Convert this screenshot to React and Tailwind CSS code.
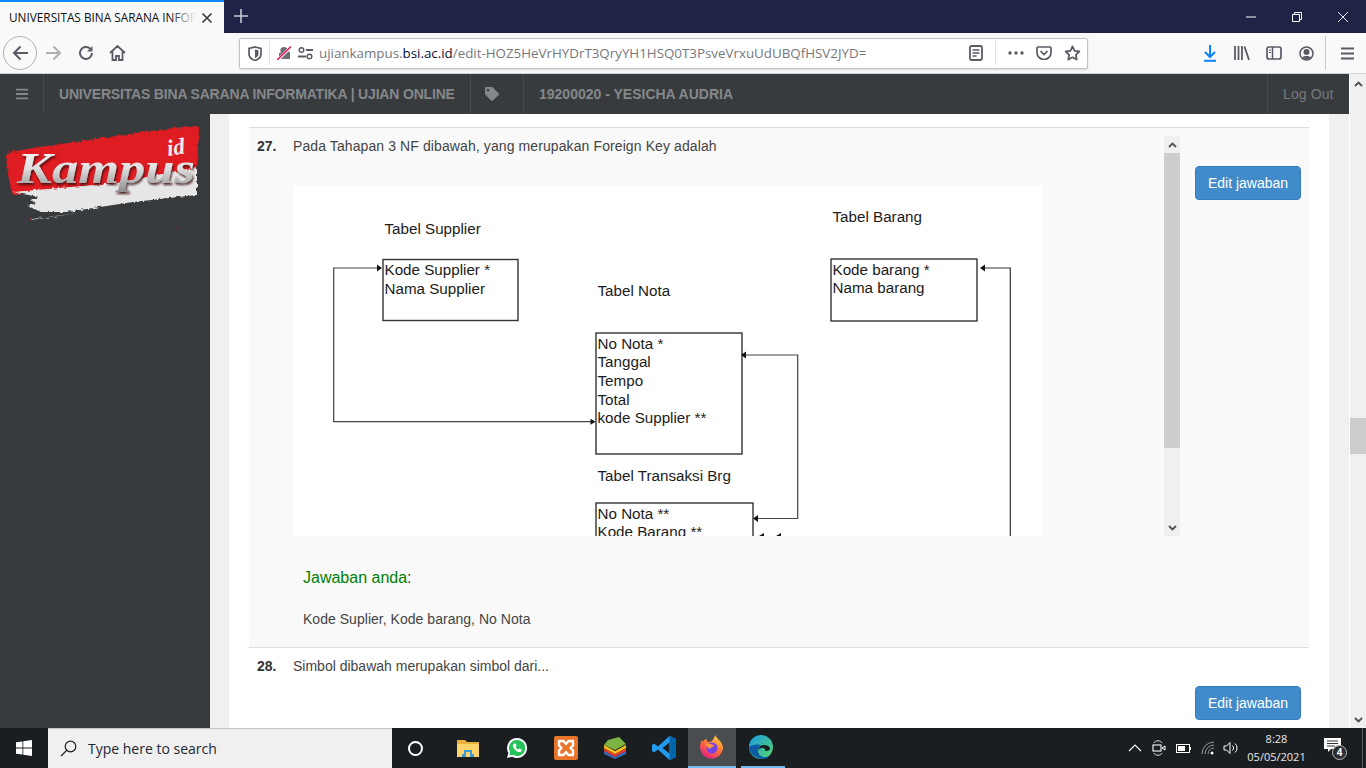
import { FaBars, FaTag } from 'react-icons/fa';

const DIAGRAM_BOXES = [
  { x: 383, y: 259.5, w: 135, h: 61 },
  { x: 596, y: 333, w: 146, h: 121 },
  { x: 596, y: 503, w: 157, h: 60 },
  { x: 831, y: 259, w: 146, h: 62 },
];

const DIAGRAM_LABELS = [
  ['Tabel Supplier', 384.5, 234],
  ['Kode Supplier *', 384.5, 274.5],
  ['Nama Supplier', 384.5, 294],
  ['Tabel Nota', 597.5, 296],
  ['No Nota *', 597.5, 349],
  ['Tanggal', 597.5, 367],
  ['Tempo', 597.5, 385.5],
  ['Total', 597.5, 404.5],
  ['kode Supplier **', 597.5, 423],
  ['Tabel Transaksi Brg', 597.5, 481],
  ['No Nota **', 597.5, 519],
  ['Kode Barang **', 597.5, 537],
  ['Tabel Barang', 832.5, 222],
  ['Kode barang *', 832.5, 275],
  ['Nama barang', 832.5, 293],
];

function Diagram() {
  return (
    <svg width="749" height="350" viewBox="293 186 749 350" className="block bg-white shrink-0">
      {DIAGRAM_BOXES.map(b => (
        <rect key={b.x + '-' + b.y} x={b.x} y={b.y} width={b.w} height={b.h} fill="none" stroke="#333" strokeWidth="1.4" />
      ))}
      <path d="M378 268H333.7V421.7H591" fill="none" stroke="#444" strokeWidth="1.2" />
      <path d="M746 355H797.7V518.5H757" fill="none" stroke="#444" strokeWidth="1.2" />
      <path d="M984 268H1010.3V540" fill="none" stroke="#333" strokeWidth="1.2" />
      <path d="M382 268l-5-3.5v7zM595.5 421.7l-5-3v6zM741 355l5-3.5v7zM753 518.5l5-3.5v7zM980 268l5-3.5v7zM759 536l5-3v6zM776 536l5-3v6z" fill="#111" />
      {DIAGRAM_LABELS.map(([label, x, y]) => (
        <text key={label} x={x} y={y} fontSize="15.2" fill="#1c1c1c" fontFamily="'Liberation Sans', sans-serif">{label}</text>
      ))}
    </svg>
  );
}

function Logo() {
  return (
    <svg width="210" height="125" viewBox="0 114 210 125" className="block">
      <defs>
        <linearGradient id="logoText" x1="0" y1="0" x2="0" y2="1">
          <stop offset="0" stopColor="#ffffff" />
          <stop offset="0.5" stopColor="#dedede" />
          <stop offset="1" stopColor="#8a8a8a" />
        </linearGradient>
        <filter id="logoShadow" x="-10%" y="-20%" width="120%" height="150%">
          <feDropShadow dx="1" dy="2" stdDeviation="1" floodColor="#3a0808" floodOpacity="0.9" />
        </filter>
        <filter id="brushEdge" x="-5%" y="-5%" width="110%" height="110%">
          <feTurbulence type="fractalNoise" baseFrequency="0.25" numOctaves="2" seed="4" />
          <feDisplacementMap in="SourceGraphic" scale="4" />
        </filter>
      </defs>
      <g filter="url(#brushEdge)">
        <path d="M6 153l27-5 50-7 60-9 54-7 2 3-2 42-80 16-104 9-5-20z" fill="#df1c20" />
        <path d="M13 192l104-9 80-16v28l-64 7-66 10-26 0-13-6 8-3-6-3 9-3z" fill="#e6e6e6" />
        <path d="M31 219l40-5 8-1-48 7z" fill="#b9b9b9" />
      </g>
      <circle cx="176" cy="227" r="0.8" fill="#8e2a2c" />
      <circle cx="128" cy="232" r="0.7" fill="#7a2a2c" />
      <circle cx="31" cy="219" r="0.9" fill="#c02226" />
      <text x="17" y="183" fontSize="44" fontWeight="700" fontStyle="italic" fontFamily="'Liberation Serif', serif" fill="url(#logoText)" filter="url(#logoShadow)" textLength="178" lengthAdjust="spacingAndGlyphs">Kampus</text>
      <text x="168" y="156" fontSize="23" fontWeight="700" fontStyle="italic" fontFamily="'Liberation Serif', serif" fill="#eeeeee" transform="rotate(-8 168 156)">id</text>
    </svg>
  );
}

function TitleBar() {
  return (
    <div className="flex h-[33px] bg-[#1f2447] shrink-0">
      <div className="relative flex items-center w-[224px] h-full bg-[#f9f9fa] border-t-2 border-[#0a84ff] pl-[9px] text-[11.8px] text-[#0c0c0d]">
        <span className="w-[187px] overflow-hidden whitespace-nowrap">UNIVERSITAS BINA SARANA INFORMATIKA</span>
        <span className="absolute left-[170px] top-0 w-[26px] h-full bg-gradient-to-r from-transparent to-[#f9f9fa]" />
        <svg width="12" height="12" viewBox="0 0 12 12" className="ml-[5px]"><path d="M1.5 1.5l9 9M10.5 1.5l-9 9" stroke="#38383d" strokeWidth="1.6" /></svg>
      </div>
      <svg width="14" height="14" viewBox="0 0 14 14" className="ml-[10px] mt-[9px]"><path d="M7 0v14M0 7h14" stroke="#c9cad3" strokeWidth="1.6" /></svg>
      <div className="flex-1" />
      <div className="flex items-center h-full pr-[18px] gap-[36px]">
        <svg width="10" height="10" viewBox="0 0 10 10"><path d="M0 5h10" stroke="#fff" strokeWidth="1" /></svg>
        <svg width="10" height="10" viewBox="0 0 10 10"><path d="M.5 2.5h7v7h-7zM2.5 2.5v-2h7v7h-2" fill="none" stroke="#fff" strokeWidth="1" /></svg>
        <svg width="10" height="10" viewBox="0 0 10 10"><path d="M0 0l10 10M10 0L0 10" stroke="#fff" strokeWidth="0.9" /></svg>
      </div>
    </div>
  );
}

function NavToolbar() {
  const ink = '#5b5b66';
  return (
    <div className="flex items-center h-[41px] bg-[#f9f9fa] border-b border-[#d2d2d4] shrink-0">
      <div className="flex items-center justify-center w-[34px] h-[34px] ml-[3px] rounded-full border border-[#b1b1b3]">
        <svg width="17" height="16" viewBox="0 0 17 16"><path d="M16 8H2M8.5 1.5L2 8l6.5 6.5" fill="none" stroke={ink} strokeWidth="2" /></svg>
      </div>
      <svg width="17" height="16" viewBox="0 0 17 16" className="ml-[8px]"><path d="M1 8h14M8.5 1.5L15 8l-6.5 6.5" fill="none" stroke="#b1b1b3" strokeWidth="2" /></svg>
      <svg width="16" height="16" viewBox="0 0 16 16" className="ml-[16px]"><path d="M14 8a6 6 0 1 1-1.8-4.3" fill="none" stroke={ink} strokeWidth="2" /><path d="M14.5 1v5.5H9z" fill={ink} /></svg>
      <svg width="17" height="16" viewBox="0 0 17 16" className="ml-[15px]"><path d="M1 8l7.5-7L16 8M3.5 6.5V15h3.5v-4h3v4h3.5V6.5" fill="none" stroke={ink} strokeWidth="1.8" /></svg>

      <div className="flex items-center w-[849px] h-[31px] ml-[113px] bg-white border border-[#c2c2c4] rounded-[2px] shadow-sm">
        <svg width="14" height="15" viewBox="0 0 14 15" className="ml-[8px]"><path d="M7 1l6 1.5V8c0 3-3 5.5-6 6.5C4 13.500 1 11 1 8V2.500z" fill="none" stroke={ink} strokeWidth="1.7" /><path d="M7 3.500l3.500.8V8c0 2-1.800 3.400-3.500 4.200z" fill={ink} /></svg>
        <span className="w-px h-[24px] bg-[#e1e1e3] ml-[7px]" />
        <svg width="14" height="14" viewBox="0 0 14 14" className="ml-[7px]"><path d="M2 13V7h1.500V5a3.500 3.500 0 0 1 7-1L13 6.500V13z" fill="#6d6d75" /><path d="M0 14.500L14 1" stroke="#fff" strokeWidth="3" /><path d="M0 14L14 .5" stroke="#f00e4d" strokeWidth="1.5" /></svg>
        <svg width="15" height="13" viewBox="0 0 15 13" className="ml-[7px]"><circle cx="3.500" cy="3" r="2.300" fill="none" stroke={ink} strokeWidth="1.500" /><path d="M8 3h7M0 9.500h8" stroke={ink} strokeWidth="1.800" /><circle cx="11.500" cy="9.500" r="2.300" fill="none" stroke={ink} strokeWidth="1.500" /></svg>
        <span className="ml-[6px] w-[648px] whitespace-nowrap text-[13.35px] text-[#76777e] font-['Open_Sans',sans-serif]">ujiankampus.<span className="text-[#0c0c3d]">bsi.ac.id</span>/edit-HOZ5HeVrHYDrT3QryYH1HSQ0T3PsveVrxuUdUBQfHSV2JYD=</span>
        <svg width="14" height="16" viewBox="0 0 14 16" className="ml-[2px]"><rect x="1" y="1" width="12" height="14" rx="1.500" fill="none" stroke={ink} strokeWidth="1.800" /><path d="M3.500 5h7M3.500 8h7M3.500 11h4" stroke={ink} strokeWidth="1.300" /></svg>
        <span className="w-px h-[24px] bg-[#e1e1e3] ml-[12px]" />
        <svg width="16" height="4" viewBox="0 0 16 4" className="ml-[12px]"><circle cx="2" cy="2" r="1.700" fill={ink} /><circle cx="8" cy="2" r="1.700" fill={ink} /><circle cx="14" cy="2" r="1.700" fill={ink} /></svg>
        <svg width="16" height="14" viewBox="0 0 16 14" className="ml-[12px]"><path d="M1 2a1 1 0 0 1 1-1h12a1 1 0 0 1 1 1v4.500a7 7 0 0 1-14 0z" fill="none" stroke={ink} strokeWidth="1.700" /><path d="M4.500 5L8 8.500 11.500 5" fill="none" stroke={ink} strokeWidth="1.700" /></svg>
        <svg width="17" height="16" viewBox="0 0 17 16" className="ml-[12px]"><path d="M8.500 1.500l2.100 4.300 4.700.7-3.400 3.300.8 4.700-4.200-2.200-4.200 2.200.8-4.700L1.700 6.500l4.700-.7z" fill="none" stroke={ink} strokeWidth="1.800" strokeLinejoin="round" /></svg>
      </div>

      <svg width="14" height="17" viewBox="0 0 14 17" className="ml-[115px]"><path d="M7 0v12M2 7l5 5 5-5" fill="none" stroke="#0a84ff" strokeWidth="2" /><path d="M1 15.800h12" stroke="#0a84ff" strokeWidth="2" /></svg>
      <svg width="16" height="14" viewBox="0 0 16 14" className="ml-[17px]"><path d="M1 0v14M4.500 0v14M8 0v14" stroke={ink} strokeWidth="1.800" /><path d="M10.500.5L15 14" stroke={ink} strokeWidth="1.800" /></svg>
      <svg width="16" height="14" viewBox="0 0 16 14" className="ml-[16px]"><rect x="1" y="1" width="14" height="12" rx="2" fill="none" stroke={ink} strokeWidth="1.700" /><path d="M6.500 1v12" stroke={ink} strokeWidth="1.500" /><path d="M3 4h2M3 6.500h2" stroke={ink} strokeWidth="1.200" /></svg>
      <svg width="15" height="15" viewBox="0 0 15 15" className="ml-[17px]"><circle cx="7.500" cy="7.500" r="6.500" fill="none" stroke={ink} strokeWidth="1.500" /><circle cx="7.500" cy="6" r="3" fill={ink} /><path d="M3 11.500c1-2 8-2 9 0-2 2.300-7 2.300-9 0z" fill={ink} /></svg>
      <span className="w-px h-[34px] bg-[#c8c8ca] ml-[11px]" />
      <svg width="13" height="13" viewBox="0 0 13 13" className="ml-[15px]"><path d="M0 1.500h13M0 6.500h13M0 11.500h13" stroke={ink} strokeWidth="1.900" /></svg>
    </div>
  );
}

function AppHeader() {
  return (
    <div className="flex items-center h-[40px] bg-[#373b3e] font-bold text-[14px] text-[#85888a] shrink-0">
      <div className="flex items-center justify-center w-[44px] h-full border-r border-[#474b4e]">
        <FaBars className="text-[14px] text-[#85888a]" />
      </div>
      <div className="flex items-center w-[427px] h-full pl-[15px] border-r border-[#474b4e] whitespace-nowrap tracking-[-0.18px]">UNIVERSITAS BINA SARANA INFORMATIKA | UJIAN ONLINE</div>
      <div className="flex items-center w-[53px] h-full pl-[14px] border-r border-[#474b4e]">
        <FaTag className="text-[14px] text-[#85888a]" />
      </div>
      <div className="pl-[15px] flex-1 whitespace-nowrap">19200020 - YESICHA AUDRIA</div>
      <div className="flex items-center w-[82px] h-full pl-[15px] border-l border-[#474b4e] font-normal text-[#777a7c] tracking-[0.1px]">Log Out</div>
    </div>
  );
}

function ScrollChevron({ down }) {
  return (
    <svg width="9" height="6" viewBox="0 0 9 6" className={down ? 'rotate-180' : ''}><path d="M1 5l3.500-3.500L8 5" fill="none" stroke="#505050" strokeWidth="1.800" /></svg>
  );
}

function EditButton() {
  return (
    <button className="w-[106px] h-[34px] bg-[#428bca] border border-[#357ebd] rounded-[4px] text-[14px] text-white">Edit jawaban</button>
  );
}

function Question27() {
  return (
    <section className="flex flex-col h-[521px] bg-[#f9f9f9] border-y border-[#dddddd] shrink-0">
      <div className="flex pt-[8px]">
        <div className="flex w-[923px] h-[400px] ml-[8px] overflow-hidden">
          <div className="w-[907px]">
            <div className="flex h-[50px] pt-[1px] leading-[18px] text-[14px] text-[#444]">
              <b className="w-[36px] text-[#333]">27.</b>
              <span className="tracking-[0.1px]">Pada Tahapan 3 NF dibawah, yang merupakan Foreign Key adalah</span>
            </div>
            <div className="ml-[36px]">
              <Diagram />
            </div>
          </div>
          <div className="flex flex-col items-center w-[16px] bg-[#f0f0f0]">
            <div className="flex items-center justify-center h-[17px]"><ScrollChevron /></div>
            <div className="w-full h-[295px] bg-[#cdcdcd]" />
            <div className="flex-1" />
            <div className="flex items-center justify-center h-[17px]"><ScrollChevron down /></div>
          </div>
        </div>
        <div className="ml-[15px] mt-[30px]"><EditButton /></div>
      </div>
      <div className="pl-[54px] pt-[32px] text-[16px] leading-[20px] text-[#008000]">Jawaban anda<span className="text-[#444]">:</span></div>
      <div className="pl-[54px] pt-[21px] text-[14px] leading-[20px] text-[#444] tracking-[0.03px]">Kode Suplier, Kode barang, No Nota</div>
    </section>
  );
}

function Question28() {
  return (
    <section className="flex flex-col">
      <div className="flex pl-[8px] pt-[9px] leading-[18px] text-[14px] text-[#444]">
        <b className="w-[36px] text-[#333]">28.</b>
        <span>Simbol dibawah merupakan simbol dari...</span>
      </div>
      <div className="flex justify-end pr-[8px] pt-[11px]"><EditButton /></div>
    </section>
  );
}

function PageScrollbar() {
  return (
    <div className="flex flex-col items-center w-[17px] bg-[#f0f0f0] border-l border-white shrink-0">
      <div className="flex items-center justify-center h-[17px] mt-[1px]"><ScrollChevron /></div>
      <div className="w-full h-[36px] mt-[326px] bg-[#cdcdcd]" />
      <div className="flex-1" />
      <div className="flex items-center justify-center h-[17px]"><ScrollChevron down /></div>
    </div>
  );
}

function FolderIcon() {
  return (
    <svg width="22" height="20" viewBox="0 0 22 20"><path d="M0 2h8l2 2h12v15H0z" fill="#e9b23e" /><path d="M0 6h22v13H0z" fill="#fbd46a" /><path d="M7 12h8v4h2v3H5v-3h2z" fill="#3f9bd8" /><path d="M9 14h4v5H9z" fill="#fbd46a" /></svg>
  );
}

function WhatsappIcon() {
  return (
    <svg width="22" height="22" viewBox="0 0 22 22"><path d="M11 1a10 10 0 0 0-8.600 15L1 21l5.200-1.300A10 10 0 1 0 11 1z" fill="#fff" /><path d="M11 3a8 8 0 0 0-6.800 12.200L3.500 18.500l3.300-.8A8 8 0 1 0 11 3z" fill="#25c35a" /><path d="M8 6.500c-.8.400-1.400 1.500-1 3 .6 2.400 3 4.800 5.400 5.400 1.500.4 2.600-.2 3-1l.2-1.300-2.200-1-1 1c-1.200-.4-2.400-1.600-2.800-2.800l1-1-1-2.200z" fill="#fff" /></svg>
  );
}

function XamppIcon() {
  return (
    <svg width="24" height="24" viewBox="0 0 24 24"><rect width="24" height="24" rx="2" fill="#e8762d" /><path d="M5 5h4.500L12 8l2.500-3H19v4.500L16.500 12l2.500 2.500V19h-4.500L12 16l-2.500 3H5v-4.500L7.500 12 5 9.500z" fill="none" stroke="#fff" strokeWidth="2.400" strokeLinejoin="round" /></svg>
  );
}

function BluestacksIcon() {
  return (
    <svg width="22" height="22" viewBox="0 0 22 22"><path d="M0 14l11 6 11-6v3l-11 5-11-5z" fill="#2d6fc4" /><path d="M0 11l11 6 11-6v3l-11 6-11-6z" fill="#e23b2e" /><path d="M0 8l11 6 11-6v3l-11 6-11-6z" fill="#f5c021" /><path d="M4 3l11-3 7 7-11 6-11-5z" fill="#7cb342" /></svg>
  );
}

function VscodeIcon() {
  return (
    <svg width="24" height="24" viewBox="0 0 24 24"><path d="M17.500 0L24 3v18l-6.500 3L6 13.500 2 16.500 0 15V9l2-1.500 4 3z" fill="#1f9cf0" /><path d="M17.500 6.500L10.500 12l7 5.500z" fill="#1b1e21" /><path d="M17.500 0L24 3v18l-6.500 3z" fill="#0065a9" /></svg>
  );
}

function FirefoxIcon() {
  return (
    <svg width="24" height="24" viewBox="0 0 24 24">
      <defs>
        <linearGradient id="ffBody" x1="0.8" y1="0" x2="0.2" y2="1"><stop offset="0" stopColor="#ffd23a" /><stop offset="0.5" stopColor="#ff7139" /><stop offset="1" stopColor="#e31587" /></linearGradient>
      </defs>
      <path d="M15 0c1 3 7 6 8 12a11.500 11.500 0 0 1-23 0c0-3 1-6 2-7l1 2c1-2 2-3 4-3-1 2 0 3 2 3 3 0 5-3 6-7z" fill="url(#ffBody)" />
      <circle cx="12" cy="13" r="5.500" fill="#7542e5" />
      <path d="M6 9c3-1 8 0 9 3-2-1-4 0-5 2-2-1-4-3-4-5z" fill="#ff9640" />
    </svg>
  );
}

function EdgeIcon() {
  return (
    <svg width="24" height="24" viewBox="0 0 24 24">
      <defs>
        <linearGradient id="edgeTop" x1="0" y1="0" x2="1" y2="1"><stop offset="0" stopColor="#1b9de2" /><stop offset="1" stopColor="#54d66c" /></linearGradient>
      </defs>
      <circle cx="12" cy="12" r="12" fill="url(#edgeTop)" />
      <path d="M0 12c1 8 8 12 14 12 3 0 5-1 7-3-5 2-11 1-12-4-.8-3 1-6 3-7-5-1-10 0-12 2z" fill="#0c59a4" />
      <path d="M9 16c0-4 3-6 6-6 3 0 5 1 6 3 0 3-3 3-5 3 1-2-1-3-3-3-2 0-4 1-4 3z" fill="#1b1e21" />
    </svg>
  );
}

function Taskbar() {
  return (
    <div className="flex items-center h-[40px] bg-[#1b1e21] text-white font-['Open_Sans',sans-serif] shrink-0">
      <svg width="16" height="16" viewBox="0 0 16 16" className="ml-[16px]"><path d="M0 2.300l6.500-.9v6.100H0zM7.300 1.300L16 0v7.500H7.300zM0 8.400h6.500v6.200L0 13.700zM7.300 8.400H16V16l-8.700-1.200z" fill="#fff" /></svg>
      <div className="flex items-center w-[344px] h-full ml-[16px] bg-[#f0f0f0] border-t border-[#c4c4c4]">
        <svg width="17" height="17" viewBox="0 0 17 17" className="ml-[12px]"><circle cx="10.500" cy="6.500" r="5.300" fill="none" stroke="#222" strokeWidth="1.200" /><path d="M6.800 10.300L1 16" stroke="#222" strokeWidth="1.200" /></svg>
        <span className="ml-[11px] text-[14px] text-[#1c2733]">Type here to search</span>
      </div>
      <span className="w-[15px] h-[15px] ml-[16px] rounded-full border-2 border-white" />
      <div className="flex items-center h-full ml-[20px]">
        <div className="flex items-center justify-center w-[49px]"><FolderIcon /></div>
        <div className="flex items-center justify-center w-[49px]"><WhatsappIcon /></div>
        <div className="flex items-center justify-center w-[49px]"><XamppIcon /></div>
        <div className="flex items-center justify-center w-[49px]"><BluestacksIcon /></div>
        <div className="flex items-center justify-center w-[49px]"><VscodeIcon /></div>
        <div className="flex items-center justify-center w-[48px] h-full bg-[#4a4d50] border-b-2 border-[#76b9ed]"><FirefoxIcon /></div>
        <div className="flex items-center justify-center w-[44px] h-full ml-[5px] pr-[4px] border-b-2 border-[#76b9ed]"><EdgeIcon /></div>
      </div>
      <div className="flex-1" />
      <svg width="14" height="8" viewBox="0 0 14 8"><path d="M1 7l6-6 6 6" fill="none" stroke="#fff" strokeWidth="1.100" /></svg>
      <svg width="14" height="16" viewBox="0 0 14 16" className="ml-[10px]"><path d="M2 3c1-3 7-3 8 0M2 13c1 3 7 3 8 0" fill="none" stroke="#ddd" strokeWidth="1" /><rect x="1" y="5" width="8" height="6" fill="none" stroke="#fff" strokeWidth="1.100" /><path d="M10 8l3-2v4z" fill="none" stroke="#fff" strokeWidth="1" /></svg>
      <svg width="15" height="9" viewBox="0 0 15 9" className="ml-[10px]"><rect x=".5" y=".5" width="13" height="8" fill="none" stroke="#fff" /><rect x="2" y="2" width="7" height="5" fill="#fff" /><path d="M14 3h1v3h-1z" fill="#fff" /></svg>
      <svg width="14" height="14" viewBox="0 0 14 14" className="ml-[10px]"><path d="M1 13A12 12 0 0 1 13 1M4 13A9 9 0 0 1 13 4M7 13a6 6 0 0 1 6-6" fill="none" stroke="#999" strokeWidth="1" /><circle cx="11" cy="12" r="1.500" fill="#fff" /></svg>
      <svg width="16" height="14" viewBox="0 0 16 14" className="ml-[8px]"><path d="M1 5h2.500L7 1.500v11L3.500 9H1z" fill="none" stroke="#fff" strokeWidth="1" /><path d="M9.500 4.500a3.500 3.500 0 0 1 0 5M12 2.500a6 6 0 0 1 0 9" fill="none" stroke="#fff" strokeWidth="1" /></svg>
      <div className="flex flex-col items-center w-[71px] ml-[2px] text-[11px] leading-[18px] text-[#e8e8e8]">
        <span>8:28</span>
        <span>05/05/2021</span>
      </div>
      <div className="relative w-[17px] h-[15px] ml-[12px] mb-[5px]">
        <svg width="17" height="15" viewBox="0 0 17 15" className="block"><path d="M0 0h17v11H7l-3 3v-3H0z" fill="#fff" /><path d="M3 3h11M3 5.500h11M3 8h8" stroke="#1b1e21" strokeWidth="0.900" /></svg>
        <span className="absolute left-[8px] top-[7px] flex items-center justify-center w-[15px] h-[15px] rounded-full bg-[#2b2e31] border border-[#bbb] text-[10px] font-bold">4</span>
      </div>
      <span className="w-px h-full ml-[21px] bg-[#5a5c5e]" />
      <div className="w-[3px]" />
    </div>
  );
}

export default function App() {
  return (
    <div className="flex flex-col w-[1366px] h-[768px] overflow-hidden bg-white font-['Liberation_Sans',sans-serif]">
      <div className="font-['Open_Sans',sans-serif]"><TitleBar /></div>
      <NavToolbar />
      <div className="flex h-[654px] overflow-hidden">
        <div className="flex flex-col flex-1">
          <AppHeader />
          <div className="flex flex-1 overflow-hidden">
            <aside className="w-[210px] bg-[#373b3e] shrink-0"><Logo /></aside>
            <div className="flex-1 pl-[19px] pr-[20px] bg-[#f0f0f0]">
              <div className="h-full px-[20px] pt-[13px] bg-white"><Question27 /><Question28 /></div>
            </div>
          </div>
        </div>
        <PageScrollbar />
      </div>
      <Taskbar />
    </div>
  );
}
